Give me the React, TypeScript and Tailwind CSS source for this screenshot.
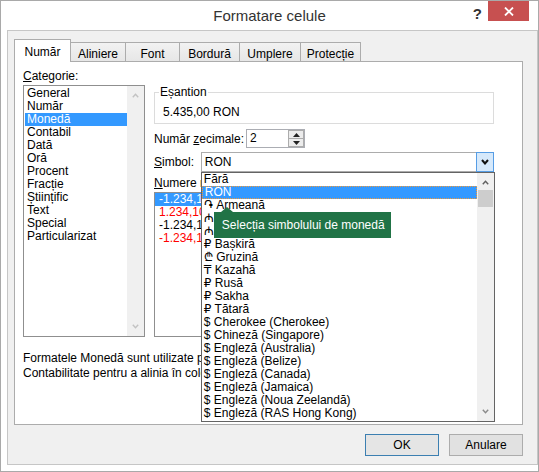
import React from "react";

const CATEGORIES = [
  "General",
  "Număr",
  "Monedă",
  "Contabil",
  "Dată",
  "Oră",
  "Procent",
  "Fracție",
  "Științific",
  "Text",
  "Special",
  "Particularizat",
];

// rows under the tooltip only show their currency sign
const SYMBOLS = [
  "Fără",
  "RON",
  "֏ Armeană",
  "₼",
  "₼",
  "₽ Bașkiră",
  "₾ Gruzină",
  "₸ Kazahă",
  "₽ Rusă",
  "₽ Sakha",
  "₽ Tătară",
  "$ Cherokee (Cherokee)",
  "$ Chineză (Singapore)",
  "$ Engleză (Australia)",
  "$ Engleză (Belize)",
  "$ Engleză (Canada)",
  "$ Engleză (Jamaica)",
  "$ Engleză (Noua Zeelandă)",
  "$ Engleză (RAS Hong Kong)",
];

const NEGATIVES = [
  { text: "-1.234,10 RON", cls: "bg-[#3399ff] text-white" },
  { text: "1.234,10 RON", cls: "text-[#ff0000]" },
  { text: "-1.234,10 RON", cls: "text-black" },
  { text: "-1.234,10 RON", cls: "text-[#ff0000]" },
];

const TABS = [
  { label: "Număr", cls: "w-[57px]" },
  { label: "Aliniere", cls: "w-[55px]" },
  { label: "Font", cls: "w-[54px]" },
  { label: "Bordură", cls: "w-[60px]" },
  { label: "Umplere", cls: "w-[61px]" },
  { label: "Protecție", cls: "w-[60px]" },
];

function Chevron({ up, color }: { up?: boolean; color: string }) {
  const pts = up ? "0.8,4.2 3.5,1.2 6.2,4.2" : "0.8,0.8 3.5,3.8 6.2,0.8";
  return (
    <svg width="7" height="5" viewBox="0 0 7 5">
      <polyline points={pts} fill="none" stroke={color} strokeWidth="1.4" />
    </svg>
  );
}

function Triangle({ up }: { up?: boolean }) {
  return (
    <svg width="7" height="4" viewBox="0 0 7 4">
      <polygon points={up ? "0,4 3.5,0 7,4" : "0,0 3.5,4 7,0"} fill="#222" />
    </svg>
  );
}

export default function App() {
  return (
    <div className="font-['Liberation_Sans','DejaVu_Sans',Arial,sans-serif] w-[539px] h-[472px] bg-white border border-[#a9a9a9] flex flex-col text-[12px] leading-[14px] text-black overflow-hidden select-none">
      {/* title bar */}
      <div className="h-[29px] shrink-0 grid grid-cols-[1fr_auto_1fr]">
        <div />
        <div className="text-[15px] leading-[29px] text-[#333333]">Formatare celule</div>
        <div className="flex justify-end items-start pr-[9px]">
          <div className="text-[15px] leading-[17px] font-bold text-[#333333] mt-[4px] mr-[6px]">?</div>
          <div className="w-[41px] h-[20px] bg-[#c75050] flex items-center justify-center">
            <svg width="10" height="9" viewBox="0 0 10 9">
              <line x1="1" y1="0.5" x2="9" y2="8.5" stroke="#fff" strokeWidth="1.8" />
              <line x1="9" y1="0.5" x2="1" y2="8.5" stroke="#fff" strokeWidth="1.8" />
            </svg>
          </div>
        </div>
      </div>

      {/* client area */}
      <div className="flex-1 ml-[6px] mb-[6px] bg-[#f0f0f0] border border-[#c6c6c6] flex flex-col pl-[6px] pr-[14px] pt-[8px]">
        {/* tabs */}
        <div className="h-[23px] flex items-end shrink-0">
          {TABS.map((t, i) =>
            i === 0 ? (
              <div
                key={t.label}
                className={`${t.cls} h-[23px] bg-white border border-b-0 border-[#acacac] relative z-10 pt-[5px] text-center`}
              >
                {t.label}
              </div>
            ) : (
              <div
                key={t.label}
                className={`${t.cls} h-[20px] bg-gradient-to-b from-[#f2f2f2] to-[#e6e6e6] border-t border-r border-[#acacac] pt-[4px] text-center`}
              >
                {t.label}
              </div>
            )
          )}
        </div>

        {/* tab page */}
        <div className="-mt-px h-[364px] shrink-0 bg-white border border-[#acacac] pl-[8px] pt-[7px] flex flex-col">
          <div className="flex">
            {/* category column */}
            <div className="w-[122px] flex flex-col">
              <div className="h-[14px]">
                <span className="underline">C</span>ategorie:
              </div>
              <div className="mt-[2px] h-[252px] border border-[#8f8f8f] bg-white flex">
                <div className="flex-1 pt-[1px] pl-[1px] flex flex-col">
                  {CATEGORIES.map((c) => (
                    <div
                      key={c}
                      className={`h-[13px] leading-[13px] px-[2px] ${c === "Monedă" ? "bg-[#3399ff] text-white" : ""}`}
                    >
                      {c}
                    </div>
                  ))}
                </div>
                <div className="w-[17px] bg-[#f0f0f0] flex flex-col items-center justify-between pt-[7px] pb-[7px]">
                  <Chevron up color="#c2c2c2" />
                  <Chevron color="#c2c2c2" />
                </div>
              </div>
            </div>

            {/* settings column */}
            <div className="ml-[9px] w-[340px] flex flex-col">
              <fieldset className="mt-[16px] border border-[#dcdcdc] p-0 m-0">
                <legend className="ml-[4px] px-[1px] leading-[14px]">Eșantion</legend>
                <div className="pl-[8px] pt-[6px] pb-[4px] h-[14px] box-content">5.435,00 RON</div>
              </fieldset>

              <div className="mt-[5px] h-[19px] flex items-center">
                <div className="w-[92px]">
                  Număr <span className="underline">z</span>ecimale:
                </div>
                <div className="w-[59px] h-[19px] border border-[#abadb3] bg-white flex">
                  <div className="flex-1 pl-[3px] leading-[17px]">2</div>
                  <div className="w-[16px] h-[17px] flex flex-col">
                    <div className="h-[9px] border border-[#acacac] bg-[#ececec] flex items-center justify-center">
                      <Triangle up />
                    </div>
                    <div className="h-[9px] -mt-px border border-[#acacac] bg-[#ececec] flex items-center justify-center">
                      <Triangle />
                    </div>
                  </div>
                </div>
              </div>

              <div className="mt-[4px] h-[20px] flex items-center">
                <div className="w-[47px]">
                  <span className="underline">S</span>imbol:
                </div>
                <div className="relative w-[294px] h-[20px] flex">
                  <div className="flex-1 h-full border-l border-y border-[#acacac] bg-white pl-[3px] leading-[18px]">
                    RON
                  </div>
                  <div className="w-[18px] h-full border border-[#569de5] bg-[#d6e9fb] flex items-center justify-center">
                    <svg width="8" height="6" viewBox="0 0 8 6">
                      <polyline points="1,1 4,4.5 7,1" fill="none" stroke="#111" strokeWidth="2" />
                    </svg>
                  </div>

                  {/* open drop-down list */}
                  <div className="absolute left-0 top-[20px] w-[294px] h-[250px] z-20 border border-[#646464] bg-white flex">
                    <div className="flex-1 flex flex-col">
                      {SYMBOLS.map((s, i) =>
                        s === "RON" ? (
                          <div
                            key={i}
                            className="h-[13px] leading-[11px] pl-[2px] bg-[#3399ff] text-white border border-dotted border-[#f09a3a]"
                          >
                            {s}
                          </div>
                        ) : (
                          <div key={i} className="h-[13px] leading-[13px] pl-[2px] whitespace-nowrap">
                            {s}
                          </div>
                        )
                      )}
                    </div>
                    <div className="w-[17px] bg-[#f0f0f0] flex flex-col items-center">
                      <div className="h-[17px] flex items-center justify-center pt-[2px]">
                        <Chevron up color="#5f5f5f" />
                      </div>
                      <div className="w-[15px] h-[17px] bg-[#cdcdcd]" />
                      <div className="flex-1" />
                      <div className="h-[17px] flex items-center justify-center pb-[2px]">
                        <Chevron color="#8a8a8a" />
                      </div>
                    </div>

                    {/* tooltip */}
                    <div className="absolute left-[12px] top-[39px] w-[177px] h-[26px] bg-[#217346] text-white pl-[8px] flex items-center">
                      <div className="absolute left-[7px] -top-[5px] w-0 h-0 border-l-[6px] border-r-[6px] border-b-[5px] border-l-transparent border-r-transparent border-b-[#217346]" />
                      Selecția simbolului de monedă
                    </div>
                  </div>
                </div>
              </div>

              <div className="mt-[4px] h-[14px] whitespace-nowrap">
                <span className="underline">N</span>umere negative:
              </div>
              <div className="mt-[2px] h-[145px] border border-[#8f8f8f] bg-white flex flex-col">
                {NEGATIVES.map((n, i) => (
                  <div key={i} className={`h-[13px] leading-[13px] pl-[4px] whitespace-nowrap ${n.cls}`}>
                    {n.text}
                  </div>
                ))}
              </div>
            </div>
          </div>

          <div className="mt-[14px] leading-[15px] whitespace-nowrap">
            Formatele Monedă sunt utilizate pentru valori monetare generale. Utilizați formatele
            <br />
            Contabilitate pentru a alinia în coloană virgulele zecimale.
          </div>
        </div>

        {/* dialog buttons */}
        <div className="mt-[9px] flex justify-end gap-[10px]">
          <div className="w-[74px] h-[22px] border border-[#3c7fb1] bg-[#e5e5e5] flex items-center justify-center">
            OK
          </div>
          <div className="w-[74px] h-[22px] border border-[#acacac] bg-[#e1e1e1] flex items-center justify-center">
            Anulare
          </div>
        </div>
      </div>
    </div>
  );
}
